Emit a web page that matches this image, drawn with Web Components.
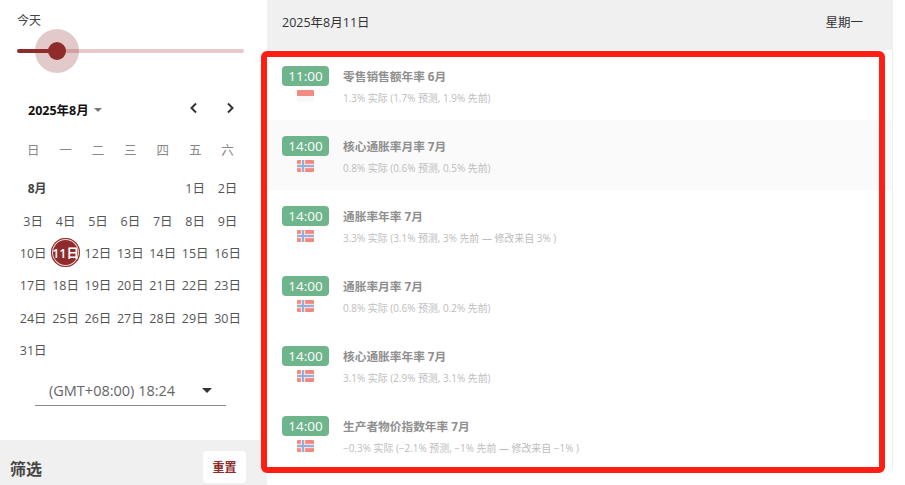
<!DOCTYPE html>
<html lang="zh">
<head>
<meta charset="utf-8">
<title>经济日历</title>
<style>
    html, body { margin: 0; height: 100%; background: #fff; }
    body { font-family: "Open Sans", "Noto Sans CJK SC", sans-serif; overflow: hidden; }
</style>
</head>
<body>
<cal-app>
    <cal-sidebar slot="side"></cal-sidebar>
    <cal-header slot="main" date="2025年8月11日" weekday="星期一"></cal-header>
    <event-row slot="main" time="11:00" flag="id" title="零售销售额年率 6月" detail="1.3% 实际 (1.7% 预测, 1.9% 先前)"></event-row>
    <event-row slot="main" shaded time="14:00" flag="no" title="核心通胀率月率 7月" detail="0.8% 实际 (0.6% 预测, 0.5% 先前)"></event-row>
    <event-row slot="main" time="14:00" flag="no" title="通胀率年率 7月" detail="3.3% 实际 (3.1% 预测, 3% 先前 — 修改来自 3% )"></event-row>
    <event-row slot="main" time="14:00" flag="no" title="通胀率月率 7月" detail="0.8% 实际 (0.6% 预测, 0.2% 先前)"></event-row>
    <event-row slot="main" time="14:00" flag="no" title="核心通胀率年率 7月" detail="3.1% 实际 (2.9% 预测, 3.1% 先前)"></event-row>
    <event-row slot="main" time="14:00" flag="no" title="生产者物价指数年率 7月" detail="−0.3% 实际 (−2.1% 预测, −1% 先前 — 修改来自 −1% )"></event-row>
</cal-app>
<script>
"use strict";
const FLAGS = {
    id: `<svg width="17" height="12" viewBox="0 0 17 12"><rect width="17" height="6" fill="#f28b82"/><rect y="6" width="17" height="6" fill="#f8f8f8"/></svg>`,
    no: `<svg width="17" height="12" viewBox="0 0 17 12"><rect width="17" height="12" fill="#f2877e"/><rect x="3.800" width="4.400" height="12" fill="#f6dedb"/><rect y="3.800" width="17" height="4.400" fill="#f6dedb"/><rect x="5" width="2" height="12" fill="#8fb0e0"/><rect y="5" width="17" height="2" fill="#8fb0e0"/></svg>`,
};

class CalApp extends HTMLElement {
    constructor() {
        super();
        this.attachShadow({ mode: 'open' });
        this.shadowRoot.innerHTML = `
<style>
    :host { display: grid; grid-template-columns: 267px 625px 13px; height: 485px; position: relative; overflow: hidden; }
    .side { display: flex; flex-direction: column; height: 485px; }
    .main { display: flex; flex-direction: column; }
    .rail { border-left: 1px solid #eee; height: 470px; }
    .mark { position: absolute; left: 261px; top: 51px; width: 612px; height: 410px; border: 6px solid #ff1f12; border-radius: 6px; pointer-events: none; }
</style>
<div class="side"><slot name="side"></slot></div>
<div class="main"><slot name="main"></slot></div>
<div class="rail"></div>
<div class="mark"></div>
`;
    }
}
customElements.define('cal-app', CalApp);

class CalHeader extends HTMLElement {
    constructor() {
        super();
        this.attachShadow({ mode: 'open' });
        this.shadowRoot.innerHTML = `
<style>
    :host { display: flex; justify-content: space-between; align-items: center; height: 43px; padding: 0 29px 7px 15px; background: #f0f0f0; color: #333; font-size: 12.500px; }
</style>
<span>${this.getAttribute('date')}</span>
<span>${this.getAttribute('weekday')}</span>
`;
    }
}
customElements.define('cal-header', CalHeader);

class EventRow extends HTMLElement {
    constructor() {
        super();
        this.attachShadow({ mode: 'open' });
        this.shadowRoot.innerHTML = `
<style>
    :host { display: flex; height: 70px; box-sizing: border-box; padding-top: 16px; padding-left: 15px; gap: 14px; background: #fff; }
    :host([shaded]) { background: #fafafa; }
    .left { display: flex; flex-direction: column; align-items: center; gap: 4px; width: 47px; }
    .time { width: 47px; height: 20px; border-radius: 4px; background: #6fb58c; color: #fff; font-size: 13.500px; line-height: 20px; text-align: center; }
    svg { display: block; border-radius: 1px; }
    .title { font-size: 11.700px; font-weight: 700; color: #8f8f8f; line-height: 20px; }
    .detail { font-size: 9.950px; color: #bdbdbd; line-height: 14px; margin-top: 5px; }
</style>
<div class="left">
    <div class="time">${this.getAttribute('time')}</div>
    ${FLAGS[this.getAttribute('flag')]}
</div>
<div>
    <div class="title">${this.getAttribute('title')}</div>
    <div class="detail">${this.getAttribute('detail')}</div>
</div>
`;
    }
}
customElements.define('event-row', EventRow);

class DaySlider extends HTMLElement {
    constructor() {
        super();
        this.attachShadow({ mode: 'open' });
        this.shadowRoot.innerHTML = `
<style>
    :host { display: block; height: 97px; box-sizing: border-box; padding: 13px 17px 0; color: #444; font-size: 12px; }
    .label { line-height: 16px; }
    .track { position: relative; height: 4px; margin-top: 20px; width: 227px; border-radius: 2px; background: #e7c9c9; }
    .fill { width: 40px; height: 4px; border-radius: 2px; background: #8f2b2b; }
    .halo { position: absolute; left: 18px; top: -20px; width: 44px; height: 44px; border-radius: 50%; background: rgba(143,43,43,.25); }
    .thumb { position: absolute; left: 31px; top: -7px; width: 18px; height: 18px; border-radius: 50%; background: #8f2b2b; }
</style>
<div class="label"><slot></slot>今天</div>
<div class="track"><div class="fill"></div><div class="halo"></div><div class="thumb"></div></div>
`;
    }
}
customElements.define('day-slider', DaySlider);

class MonthCalendar extends HTMLElement {
    constructor() {
        super();
        this.attachShadow({ mode: 'open' });
        const heads = ['日', '一', '二', '三', '四', '五', '六'].map(d => `<div class="head">${d}</div>`).join('');
        let cells = `<div class="month">8月</div><div></div><div></div><div></div><div></div>`;
        for (let d = 1; d <= 31; d++) {
            cells += `<div class="day${d === 11 ? ' on' : ''}"><span>${d}日</span></div>`;
        }
        this.shadowRoot.innerHTML = `
<style>
    :host { display: block; padding: 0 17px 0 17px; color: #555; }
    .top { display: flex; align-items: center; height: 24px; padding: 0 12px 0 11px; font-size: 12.500px; font-weight: 700; color: #111; }
    .caret { width: 0; height: 0; margin: 2px 0 0 5px; border: 4.500px solid transparent; border-top-color: #777; border-bottom: 0; }
    .nav { margin-left: auto; margin-top: -2px; display: flex; gap: 20px; }
    .nav svg { display: block; }
    .grid { display: grid; grid-template-columns: repeat(7, 32.400px); grid-template-rows: 30.850px; grid-auto-rows: 32.300px; margin: 20px 0 0 0; font-size: 12.500px; }
    .head, .day, .month { display: flex; align-items: center; justify-content: center; }
    .head { color: #888; align-self: start; height: 16px; }
    .month { font-weight: 700; color: #444; grid-column: 1; grid-row: 2; font-size: 12px; padding-left: 8px; }
    .day span { display: flex; align-items: center; justify-content: center; width: 29px; height: 29px; border-radius: 50%; white-space: nowrap; }
    .on span { background: #8f2b2b; color: #fff; font-weight: 600; box-shadow: inset 0 0 0 1px #8f2b2b, inset 0 0 0 2px #e9d5d5; }
</style>
<div class="top">2025年8月<span class="caret"></span>
    <div class="nav">
        <svg width="16" height="16" viewBox="0 0 16 16" fill="none" stroke="#333" stroke-width="2"><path d="M10 3.500 5.500 8l4.500 4.500"/></svg>
        <svg width="16" height="16" viewBox="0 0 16 16" fill="none" stroke="#333" stroke-width="2"><path d="M6 3.500 10.500 8 6 12.500"/></svg>
    </div>
</div>
<div class="grid">${heads}${cells}</div>
`;
    }
}
customElements.define('month-calendar', MonthCalendar);

class ZoneSelect extends HTMLElement {
    constructor() {
        super();
        this.attachShadow({ mode: 'open' });
        this.shadowRoot.innerHTML = `
<style>
    :host { display: flex; align-items: center; width: 191px; height: 30px; margin: 10.500px 0 0 35px; box-sizing: border-box; padding: 0 14px 0 14px; border-bottom: 1px solid #8a8a8a; color: #666; font-size: 14.500px; }
    .caret { margin-left: auto; width: 0; height: 0; border: 5px solid transparent; border-top-color: #333; border-bottom: 0; }
</style>
<span><slot></slot></span><span class="caret"></span>
`;
    }
}
customElements.define('zone-select', ZoneSelect);

class FilterBar extends HTMLElement {
    constructor() {
        super();
        this.attachShadow({ mode: 'open' });
        this.shadowRoot.innerHTML = `
<style>
    :host { display: flex; align-items: center; justify-content: space-between; height: 45px; margin-top: auto; padding: 9px 21px 0 10px; box-sizing: border-box; background: #f0f0f0; }
    .name { font-size: 16px; font-weight: 700; color: #444; margin-top: 1px; }
    button { all: unset; width: 43px; height: 32px; background: #fff; border-radius: 4px; color: #8f2b2b; font-size: 12px; font-weight: 700; text-align: center; }
</style>
<span class="name">筛选</span><button>重置</button>
`;
    }
}
customElements.define('filter-bar', FilterBar);

class CalSidebar extends HTMLElement {
    constructor() {
        super();
        this.attachShadow({ mode: 'open' });
        this.shadowRoot.innerHTML = `
<style>
    :host { display: flex; flex-direction: column; height: 485px; }
</style>
<day-slider></day-slider>
<month-calendar></month-calendar>
<zone-select>(GMT+08:00) 18:24</zone-select>
<filter-bar></filter-bar>
`;
    }
}
customElements.define('cal-sidebar', CalSidebar);
</script>
</body>
</html>
